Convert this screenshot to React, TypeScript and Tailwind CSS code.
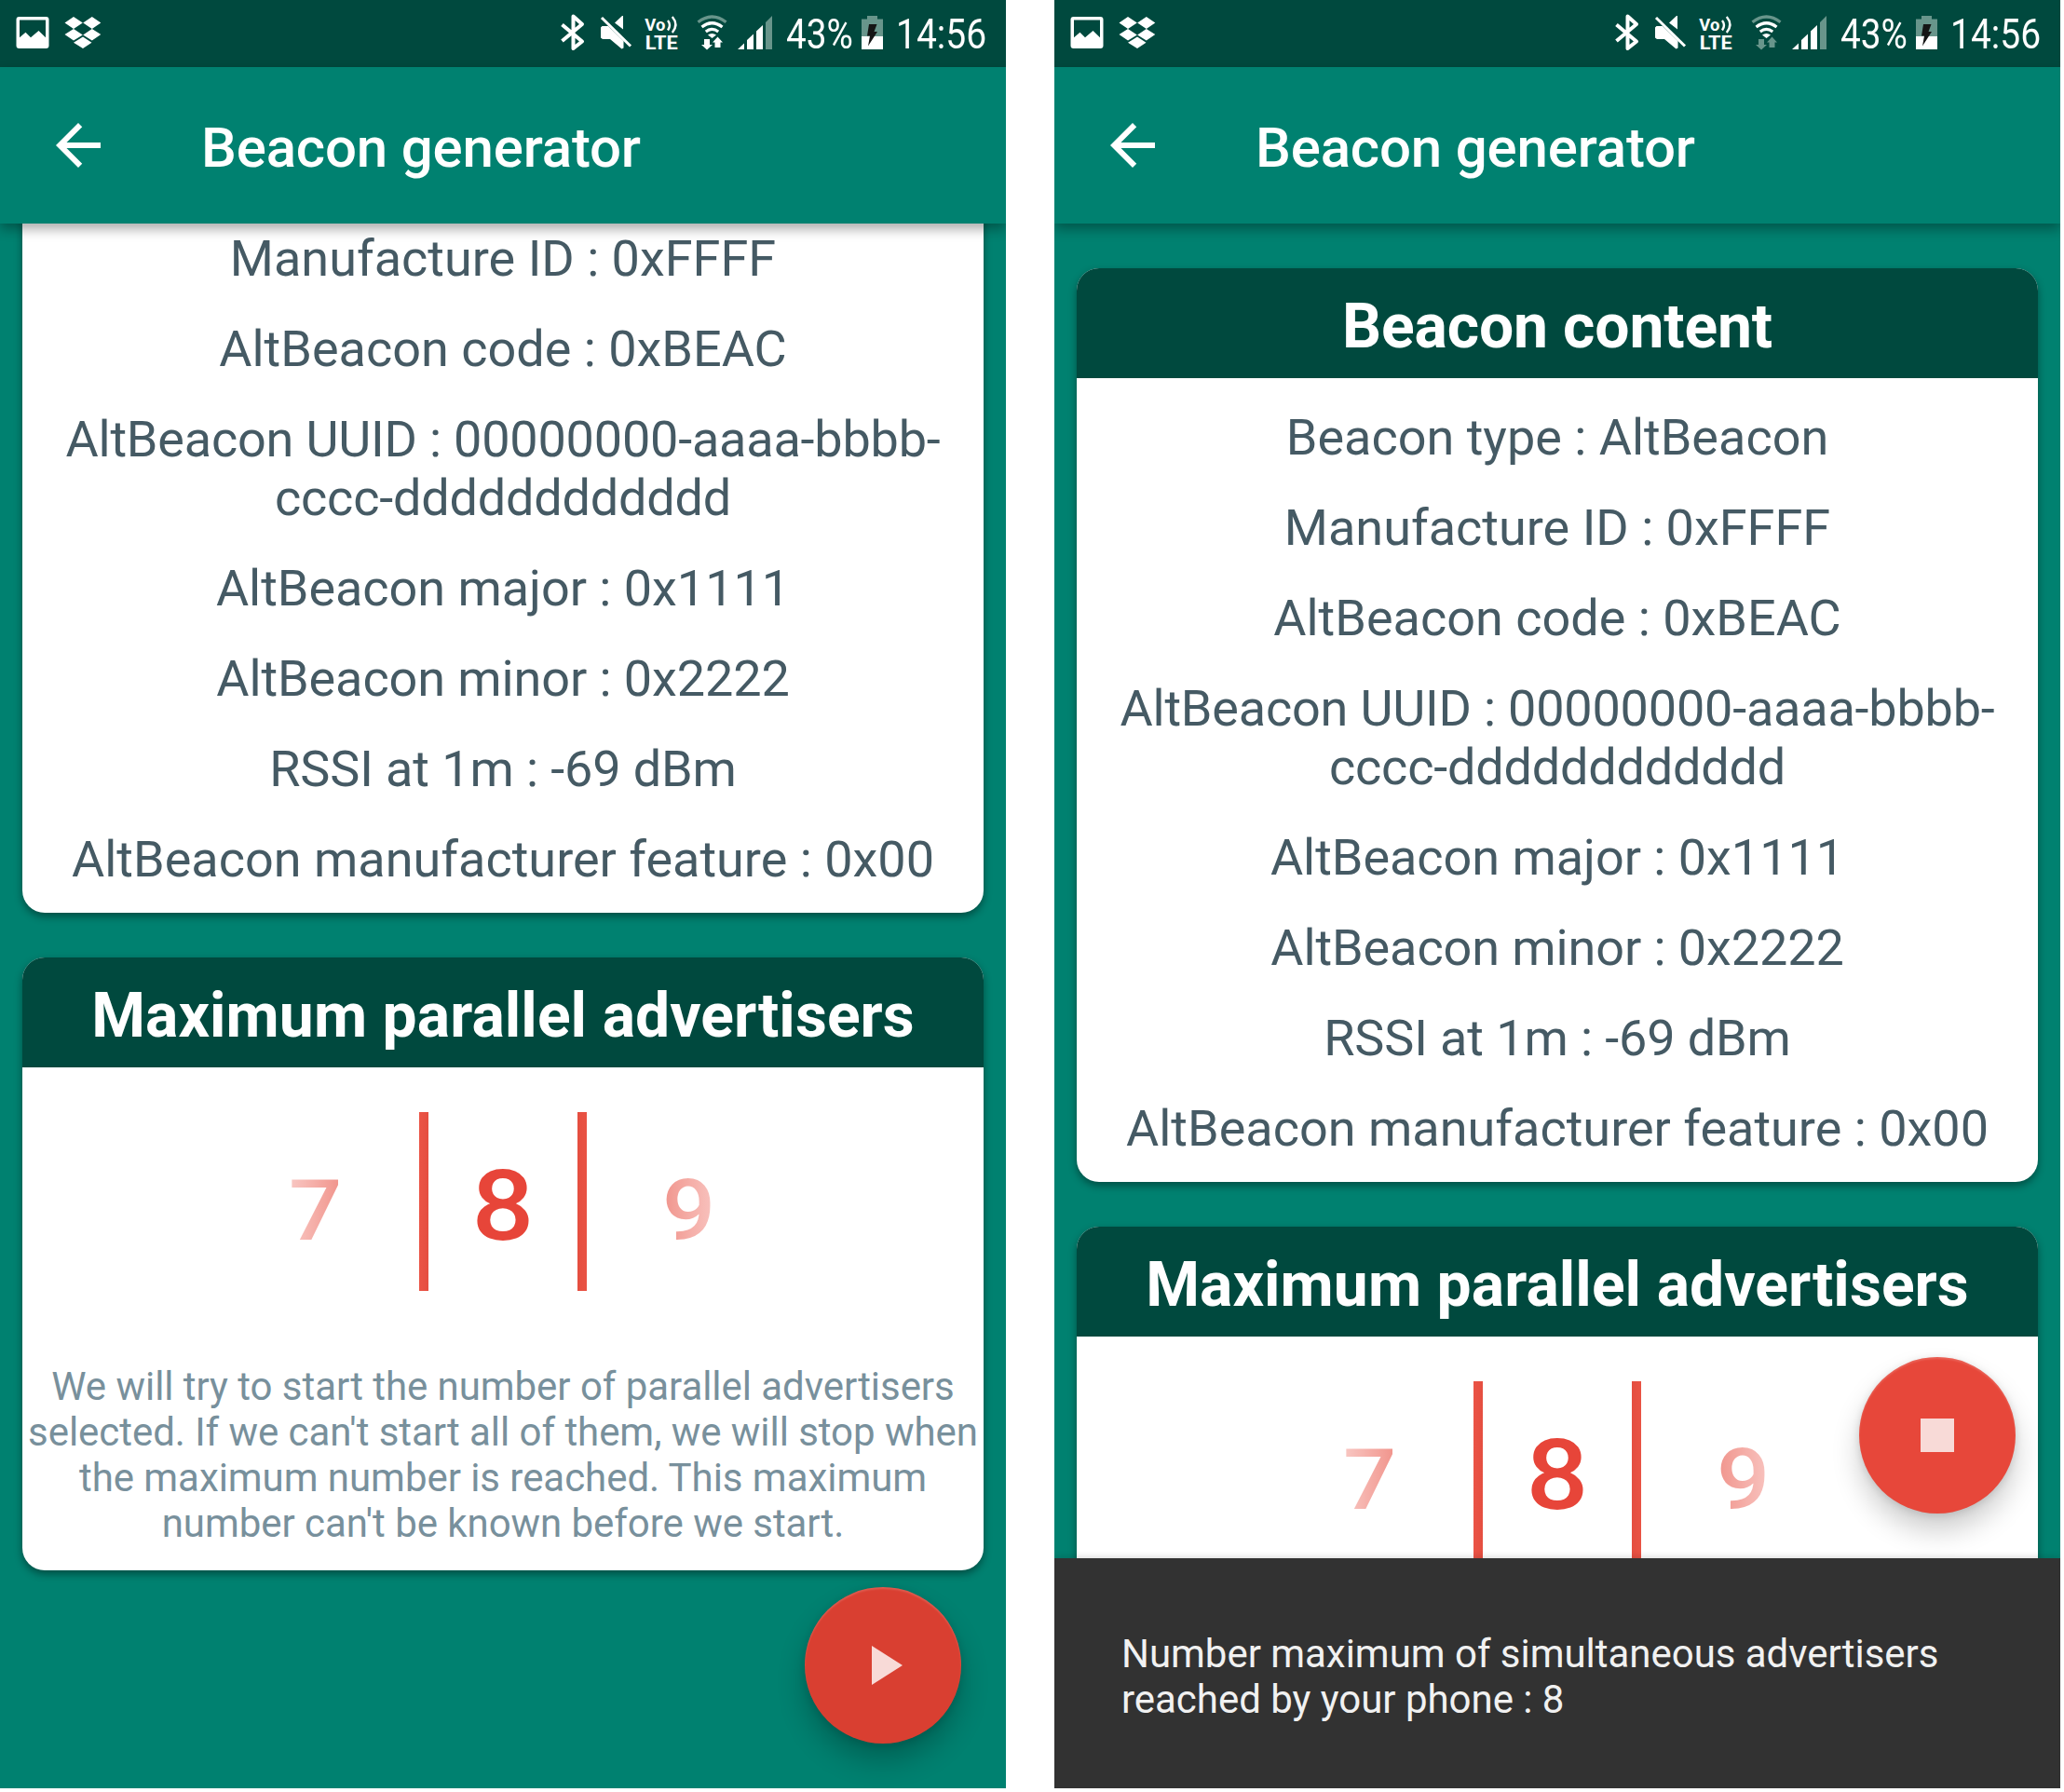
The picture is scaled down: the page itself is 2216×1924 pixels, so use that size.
const rows = [
  { text: 'Beacon type : AltBeacon', className: '' },
  { text: 'Manufacture ID : 0xFFFF', className: '' },
  { text: 'AltBeacon code : 0xBEAC', className: '' },
  {
    text: 'AltBeacon UUID : 00000000-aaaa-bbbb-cccc-dddddddddddd',
    className: 'h-[127px] leading-[63px] tracking-[-0.2px]',
  },
  { text: 'AltBeacon major : 0x1111', className: 'tracking-[-0.04px]' },
  { text: 'AltBeacon minor : 0x2222', className: 'tracking-[-0.1px]' },
  { text: 'RSSI at 1m : -69 dBm', className: 'tracking-[-0.12px]' },
  { text: 'AltBeacon manufacturer feature : 0x00', className: '' },
];

function StatusIcons({ dimTraffic }: { dimTraffic: boolean }) {
  const dim = '#68958b';
  return (
    <svg className="h-[72px] w-[248px] shrink-0" viewBox="590 0 248 72" fill="#fff">
      {/* bluetooth */}
      <path
        d="M603.5 26.5 L625 44.5 L615.5 52 V17.5 L625 26 L603.5 44"
        fill="none"
        stroke="#fff"
        strokeWidth="4"
        strokeLinejoin="round"
      />
      {/* muted speaker */}
      <path d="M645 29.500 L646.500 28 H653 L669.500 44 V51.500 L667.500 52.500 L655 42 H647 L645 40.500Z M669 17 V31.500 L660 24.500 L668 17Z" />
      <path d="M646 19 L677 49.500" stroke="#fff" strokeWidth="3" />
      {/* VoLTE */}
      <text x="692.300" y="32.600" fontSize="18.700" fontWeight="700" fontFamily="Roboto" textLength="22" lengthAdjust="spacingAndGlyphs">Vo</text>
      <text x="692.700" y="53" fontSize="20" fontWeight="700" fontFamily="Roboto" textLength="35" lengthAdjust="spacingAndGlyphs">LTE</text>
      <path d="M717 22 Q721 27 717 32.500 M721.800 18 Q729 26.500 721.800 35" fill="none" stroke="#fff" strokeWidth="2.400" />
      {/* wifi */}
      <g fill="none" strokeWidth="3.200">
        <path d="M749.500 23.800 Q764.500 12.200 779.500 23.800" stroke={dim} />
        <path d="M753.500 29 Q764.500 20.500 775.500 29 M757.800 34 Q764.500 28.800 771.200 34" stroke="#fff" />
      </g>
      <path d="M760 37.500 Q764.500 34.500 769 37.500 L764.500 41Z" />
      <path
        d="M756 42 H762 V48 H765 L759 53.500 L753 48 H756Z M767.500 51 H773.500 V45.500 H776 L770.500 39.500 L765 45.500 H767.500Z"
        fill={dimTraffic ? dim : '#fff'}
      />
      {/* signal */}
      <path d="M792 53 L799 46.500 V53Z M802 43 L809 36.500 V53 H802Z M812 33.500 L819 27 V53 H812Z" />
      <path d="M822 24 L829 17 V53 H822Z" fill={dim} />
    </svg>
  );
}

function StatusBar({ dimTraffic }: { dimTraffic: boolean }) {
  return (
    <div className="flex h-[72px] shrink-0 items-center bg-[#00493e] text-[45px] leading-none text-white">
      <svg className="h-[72px] w-[110px] shrink-0" viewBox="0 0 110 72" fill="#fff">
        <path
          fillRule="evenodd"
          d="M20.500 18 H49.500 Q52.500 18 52.500 21 V49 Q52.500 52 49.500 52 H20.500 Q17.500 52 17.500 49 V21 Q17.500 18 20.500 18Z M21 21.500 V40.300 L27.500 34.800 L33 40.300 L41.500 33 L49 40.300 V21.500Z"
        />
        <path d="M79 18 L88.800 24.500 L79 31 L69.500 24.500Z M98.800 18 L108.300 24.500 L98.800 31 L89.200 24.500Z M79 31 L88.800 37.500 L79 43.500 L69.500 37Z M98.800 31 L108.300 37 L98.800 43.500 L89.200 37.500Z M89 39.500 L98.500 45.700 L89 52 L79 45.700Z" />
      </svg>
      <div className="grow" />
      <StatusIcons dimTraffic={dimTraffic} />
      <div className="ml-[6px] w-[72px] whitespace-nowrap">
        <div className="origin-left scale-x-[0.86]">43%</div>
      </div>
      <svg className="ml-[9px] h-[72px] w-[23px] shrink-0" viewBox="925 0 23 72">
        <path d="M925 20.500 H931 V17 H942 V20.500 H948 V39 H925Z" fill="#68958b" />
        <path d="M925 39 H948 V53 H925Z" fill="#fff" />
        <path d="M933 26 H941.500 L938.500 34 H942 L932 49.500 L934 38.500 H931Z" fill="#151515" />
      </svg>
      <div className="ml-[14px] w-[118px] whitespace-nowrap">
        <div className="origin-left scale-x-[0.866]">14:56</div>
      </div>
    </div>
  );
}

function AppBar() {
  return (
    <div className="relative z-10 flex h-[168px] shrink-0 items-center bg-[#008170] pl-[60px] shadow-[0_6px_12px_rgba(0,0,0,0.33)]">
      <svg className="h-12 w-12" viewBox="0 0 16 16" fill="#fff">
        <path d="M16 7H3.830l5.590-5.590L8 0 0 8l8 8 1.410-1.410L3.830 9H16z" />
      </svg>
      <h1 className="ml-[108px] pt-[6px] text-[60px] leading-[70px] font-medium tracking-[-0.18px] text-white">
        Beacon generator
      </h1>
    </div>
  );
}

function Card({ title, titleClass = '', children }: { title: string; titleClass?: string; children: React.ReactNode }) {
  return (
    <section className="mx-6 mb-12 shrink-0 overflow-hidden rounded-[24px] bg-white shadow-[0_4px_9px_rgba(0,0,0,0.4)]">
      <h2 className={`h-[118px] bg-[#00493e] pt-6 text-center text-[66px] leading-[78px] font-bold text-white ${titleClass}`}>
        {title}
      </h2>
      {children}
    </section>
  );
}

function ContentCard() {
  return (
    <Card title="Beacon content" titleClass="tracking-[-0.15px]">
      <div className="flex h-[863px] flex-col gap-[33px] px-6 pt-8 text-center text-[54px] leading-[64px] text-[#455a64]">
        {rows.map((row) => (
          <p key={row.text} className={row.className}>
            {row.text}
          </p>
        ))}
      </div>
    </Card>
  );
}

function Picker() {
  return (
    <div className="mx-auto flex h-[192px] w-[570px] items-stretch justify-center font-medium">
      <div className="flex w-[195px] items-start justify-center pt-[54px] pr-[28px] text-[90px] leading-[105px]">
        <span className="scale-x-[1.12] bg-gradient-to-r from-[#f8c8c4] to-[#f0928a] bg-clip-text text-transparent">7</span>
      </div>
      <div className="w-[10px] bg-gradient-to-r from-[#eb5446] to-[#e54e40]" />
      <div className="w-[160px] pt-[40px] text-center text-[105px] leading-[123px] text-[#e74539]">
        <span className="inline-block scale-x-[1.12]">8</span>
      </div>
      <div className="w-[10px] bg-gradient-to-r from-[#e54e40] to-[#e95344]" />
      <div className="flex w-[195px] items-start justify-center pt-[54px] pl-[25px] text-[90px] leading-[105px]">
        <span className="scale-x-[1.12] bg-gradient-to-l from-[#f8c4c0] to-[#f0948c] bg-clip-text text-transparent">9</span>
      </div>
    </div>
  );
}

function AdvertisersCard() {
  return (
    <Card title="Maximum parallel advertisers" titleClass="tracking-[0.08px]">
      <div className="h-[540px] pt-12">
        <Picker />
        <p className="mt-[78px] text-center text-[42px] leading-[49px] tracking-[-0.05px] text-[#78909c]">
          We will try to start the number of parallel advertisers selected. If we can't start all of them, we will stop when
          the maximum number is reached. This maximum number can't be known before we start.
        </p>
      </div>
    </Card>
  );
}

function Fab({ icon, className }: { icon: 'play' | 'stop'; className: string }) {
  return (
    <button
      className={`absolute right-12 z-20 flex size-[168px] items-center justify-center rounded-full ${className}`}
    >
      <svg className="size-[72px]" viewBox="0 0 24 24" fill="#f8dad7">
        {icon === 'play' ? <path d="M8 5v14l11-7z" /> : <path d="M6 6h12v12H6z" />}
      </svg>
    </button>
  );
}

function Phone({ children, dimTraffic = false }: { children: React.ReactNode; dimTraffic?: boolean }) {
  return (
    <main className="relative flex h-[1920px] w-[1080px] shrink-0 flex-col overflow-hidden bg-[#008170]">
      <StatusBar dimTraffic={dimTraffic} />
      <AppBar />
      {children}
    </main>
  );
}

export default function App() {
  return (
    <div className="flex h-[1924px] w-[2216px] gap-[52px] overflow-hidden bg-white font-['Roboto',sans-serif]">
      <Phone>
        <div className="flex min-h-0 grow flex-col justify-start overflow-hidden">
          <div className="-mt-[241px] flex flex-col">
            <ContentCard />
            <AdvertisersCard />
          </div>
        </div>
        <Fab icon="play" className="bottom-12 bg-[#d93f31] shadow-[0_18px_30px_rgba(0,0,0,0.24),0_2px_8px_rgba(0,0,0,0.13),inset_0_2px_2px_rgba(255,255,255,0.15)]" />
      </Phone>
      <Phone dimTraffic>
        <div className="flex min-h-0 grow flex-col overflow-hidden pt-12">
          <ContentCard />
          <AdvertisersCard />
        </div>
        <Fab icon="stop" className="bottom-[295px] bg-[#e7473a] shadow-[0_18px_30px_rgba(0,0,0,0.2),0_2px_8px_rgba(0,0,0,0.12),inset_0_2px_2px_rgba(255,255,255,0.15)]" />
        <div className="relative z-10 h-[247px] shrink-0 bg-[#323232] pt-[78px] pl-[72px] text-[42px] leading-[49px] tracking-[-0.03px] text-[#f1f1f1] shadow-[0_0_8px_rgba(0,0,0,0.2)]">
          Number maximum of simultaneous advertisers
          <br />
          reached by your phone : 8
        </div>
      </Phone>
    </div>
  );
}
